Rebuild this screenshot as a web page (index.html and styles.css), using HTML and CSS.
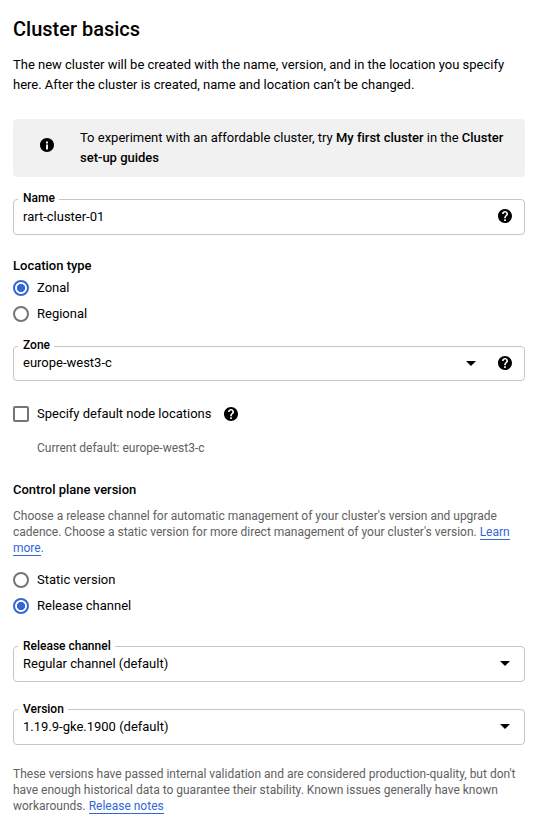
FILE: index.html
```html
<!DOCTYPE html>
<html lang="en">
<head>
<meta charset="utf-8">
<title>Cluster basics</title>
<link rel="stylesheet" href="styles.css">
</head>
<body>
<svg width="0" height="0" class="defs" aria-hidden="true">
  <symbol id="help" viewBox="2 2 20 20"><path d="M12 2C6.48 2 2 6.48 2 12s4.48 10 10 10 10-4.48 10-10S17.52 2 12 2zm1.2 17h-2.4v-2.3h2.4V19zm2.2-7.75-.9.92c-.85.86-1.3 1.53-1.3 3.08h-2.4v-.5c0-1.2.5-2.2 1.3-3.1l1.24-1.26c.37-.36.58-.86.58-1.39 0-1.1-.85-1.9-1.92-1.9S10.100 7.900 10.100 9H7.700c0-2.400 1.900-4.300 4.300-4.300s4.300 1.900 4.300 4.300c0 .9-.35 1.700-.9 2.250z"/></symbol>
  <symbol id="info" viewBox="2 2 20 20"><path d="M12 2C6.480 2 2 6.480 2 12s4.480 10 10 10 10-4.480 10-10S17.520 2 12 2zm1.430 16.430h-2.860v-7.150h2.860v7.150zm0-8.580h-2.860V7h2.860v2.850z"/></symbol>
  <symbol id="arrow" viewBox="0 0 10 5"><path d="M0 0h10L5 5z"/></symbol>
</svg>
<main class="panel">
  <h1 class="title">Cluster basics</h1>
  <p class="intro">The new cluster will be created with the name, version, and in the location you specify here. After the cluster is created, name and location can’t be changed.</p>

  <div class="banner">
    <svg class="icon"><use href="#info"/></svg>
    <p class="banner-text">To experiment with an affordable cluster, try <b>My first cluster</b> in the <b>Cluster set-up guides</b></p>
  </div>

  <div class="field field-name">
    <span class="field-label">Name</span>
    <span class="field-value">rart-cluster-01</span>
    <svg class="icon"><use href="#help"/></svg>
  </div>

  <h2 class="heading">Location type</h2>
  <div class="options">
    <label class="option"><span class="radio checked"></span>Zonal</label>
    <label class="option"><span class="radio"></span>Regional</label>
  </div>

  <div class="field field-zone">
    <span class="field-label">Zone</span>
    <span class="field-value">europe-west3-c</span>
    <svg class="arrow"><use href="#arrow"/></svg>
    <svg class="icon"><use href="#help"/></svg>
  </div>

  <div class="option node-locations"><span class="checkbox"></span>Specify default node locations<svg class="icon"><use href="#help"/></svg></div>
  <p class="hint current">Current default: europe-west3-c</p>

  <h2 class="heading heading-version">Control plane version</h2>
  <p class="hint">Choose a release channel for automatic management of your cluster's version and upgrade cadence. Choose a static version for more direct management of your cluster's version. <a class="link">Learn more</a>.</p>
  <div class="options options-version">
    <label class="option"><span class="radio"></span>Static version</label>
    <label class="option"><span class="radio checked"></span>Release channel</label>
  </div>

  <div class="field field-channel">
    <span class="field-label">Release channel</span>
    <span class="field-value">Regular channel (default)</span>
    <svg class="arrow arrow-end"><use href="#arrow"/></svg>
  </div>
  <div class="field field-version">
    <span class="field-label">Version</span>
    <span class="field-value">1.19.9-gke.1900 (default)</span>
    <svg class="arrow arrow-end"><use href="#arrow"/></svg>
  </div>
  <p class="hint notes">These versions have passed internal validation and are considered production-quality, but don't have enough historical data to guarantee their stability. Known issues generally have known workarounds. <a class="link">Release notes</a></p>
</main>
</body>
</html>
```

FILE: styles.css
```css
* { box-sizing: border-box; }
body {
  margin: 0;
  background: #fff;
  color: #000;
  font: 400 13px/20px Roboto, sans-serif;
  letter-spacing: -0.005px;
}
h1, h2, p { margin: 0; }
b { font-weight: 500; }
.defs { position: absolute; }
.panel { width: 512px; margin-left: 13px; padding-top: 17px; }
.title { font-size: 20px; font-weight: 500; line-height: 24px; }
.intro { margin-top: 14px; }
.icon { width: 14px; height: 14px; flex: none; display: block; }
.arrow { width: 10px; height: 5px; flex: none; margin-right: 22px; }
.arrow-end { margin-right: 2px; }

.banner {
  display: flex;
  height: 58px;
  margin-top: 24px;
  padding: 9px 16px 0 27px;
  background: #f1f1f1;
  border-radius: 4px;
}
.banner .icon { margin-top: 10px; }
.banner-text { margin-left: 26px; }

.field {
  position: relative;
  display: flex;
  align-items: center;
  height: 36px;
  padding: 0 12px 1px 9px;
  border: 1px solid #c6c6c6;
  border-radius: 4px;
}
.field-label {
  position: absolute;
  top: -10px;
  left: 4px;
  padding: 0 4px 0 5px;
  background: #fff;
  font-size: 12px;
  font-weight: 500;
  line-height: 16px;
}
.field-value { flex: 1; }
.field-name { margin-top: 22px; }
.field-name .icon { margin-bottom: 1px; }
.field-zone { height: 35px; margin-top: 19px; }
.field-channel { margin-top: 27px; }
.field-version { margin-top: 27px; }
.field-channel .field-label, .field-version .field-label { top: -9px; }

.heading { font-size: 13px; font-weight: 500; line-height: 20px; margin-top: 21px; }
.options { margin-top: -1px; }
.option { display: flex; align-items: center; height: 26px; }
.radio {
  width: 16px;
  height: 16px;
  margin-right: 8px;
  border: 2px solid #757575;
  border-radius: 50%;
}
.radio.checked {
  border-color: #3367d6;
  background: radial-gradient(circle, #3367d6 3.8px, transparent 4.4px);
}
.checkbox {
  width: 16px;
  height: 16px;
  margin-right: 8px;
  border: 2px solid #757575;
  border-radius: 2px;
}
.node-locations { margin-top: 20px; }
.node-locations .icon { margin-left: 12.5px; }
.hint { color: #616161; font-size: 12px; line-height: 16px; letter-spacing: -0.002px; }
.current { margin: 13px 0 0 24px; }
.heading-version { margin-top: 24px; }
.heading-version + .hint { margin-top: 8px; }
.options-version { margin-top: 11px; }
.notes { margin-top: 21px; }
.link { color: #3367d6; border-bottom: 1px solid #3367d6; }
```
